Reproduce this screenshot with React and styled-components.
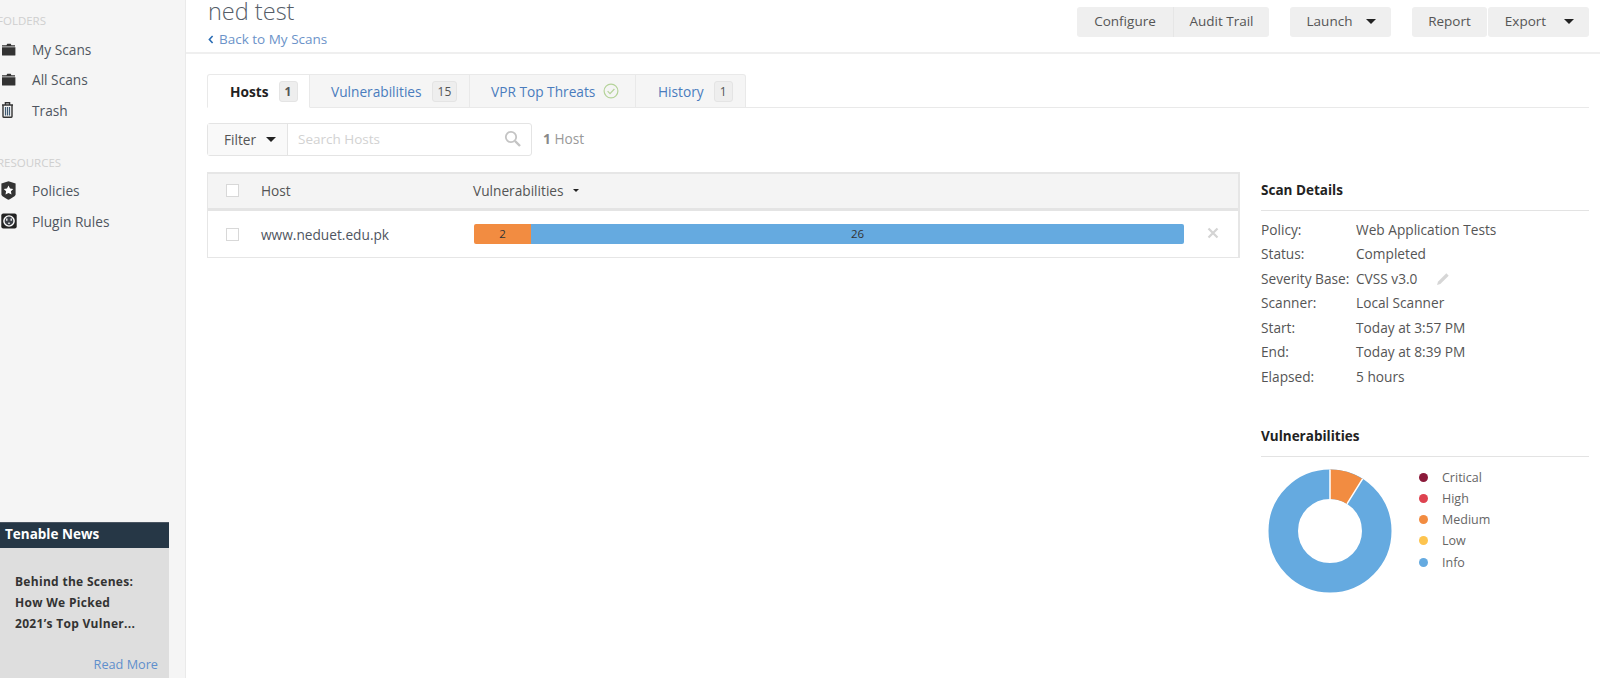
import styled, { createGlobalStyle } from "styled-components";

const GlobalStyle = createGlobalStyle`
html, body {
    margin: 0;
    height: 678px;
    overflow: hidden;
    background: #fff;
}
* { box-sizing: border-box; }
body {
    font-family: "Open Sans", "Liberation Sans", sans-serif;
    font-size: 13.7px;
    color: #555;
}
`;

const FolderIcon = () => (
    <svg width="15" height="13" viewBox="0 0 15 13">
        <path d="M1 2.2h4.4l.9-1.4h3.4l.7 1.4H14v1.3H1z" fill="#333" />
        <path d="M1 4.3h13.4V12a.6.6 0 0 1-.6.6H1.6A.6.6 0 0 1 1 12z" fill="#333" />
    </svg>
);

const TrashIcon = () => (
    <svg width="13" height="16" viewBox="0 0 13 16">
        <path d="M4.4 2.4V.8h4.2v1.6M1 3h11M2 3v11.6c0 .4.2.6.6.6h7.8c.4 0 .6-.2.6-.6V3" fill="none" stroke="#333" strokeWidth="1.4" />
        <path d="M4.5 5v8.4M6.5 5v8.4M8.5 5v8.4" stroke="#3f5a72" strokeWidth="1.2" />
    </svg>
);

const ShieldIcon = () => (
    <svg width="15" height="19" viewBox="0 0 15 19">
        <path d="M7.5.2 14.6 2.6v11c0 1.4-3.9 3.8-7.1 5.2C4.3 17.4.4 15 .4 13.600V2.600z" fill="#333" />
        <path d="m7.5 4.600 1.500 3 3.300.4-2.400 2.300.6 3.300-3-1.600-3 1.600.6-3.300-2.400-2.300 3.300-.4z" fill="#fff" />
    </svg>
);

const PlugIcon = () => (
    <svg width="16" height="16" viewBox="0 0 16 16">
        <rect x="0.3" y="0.5" width="15.4" height="15" rx="2" fill="#222" />
        <circle cx="8" cy="8" r="5.8" fill="#fff" />
        <circle cx="8" cy="8" r="4.4" fill="#3b3f46" />
        <path d="M5.800 5.500v2.300M10.200 5.500v2.300" stroke="#fff" strokeWidth="1.300" />
        <path d="M6.900 10.700a1.100 1.100 0 0 1 2.200 0z" fill="#fff" />
    </svg>
);

const Caret = styled.span`
    display: inline-block;
    width: 0;
    height: 0;
    border-left: ${(p) => p.$size || 5}px solid transparent;
    border-right: ${(p) => p.$size || 5}px solid transparent;
    border-top: ${(p) => p.$size || 5}px solid #222;
`;

const Page = styled.div`
    display: flex;
    width: 1600px;
    height: 678px;
    overflow: hidden;
`;

const Sidebar = styled.aside`
    flex: 0 0 186px;
    height: 678px;
    background: #f5f5f5;
    border-right: 1px solid #eaeaea;
    display: flex;
    flex-direction: column;
    overflow: hidden;
`;

const SideLabel = styled.div`
    margin-left: -3px;
    margin-top: ${(p) => p.$top}px;
    margin-bottom: 4px;
    height: 18px;
    line-height: 18px;
    font-size: 11.5px;
    color: #cfcfcf;
    text-transform: uppercase;
`;

const SideItem = styled.div`
    display: flex;
    align-items: center;
    height: 30.500px;
    color: #4f5560;
    font-size: 13.7px;
`;

const SideIcon = styled.span`
    flex: 0 0 32px;
    padding-left: 1px;
    display: flex;
    align-items: center;
`;

const News = styled.section`
    margin-top: auto;
    width: 169px;
    height: 156px;
    background: #dedede;
    display: flex;
    flex-direction: column;
`;

const NewsHead = styled.div`
    height: 26px;
    line-height: 23px;
    padding-left: 5px;
    background: #263746;
    color: #fff;
    font-weight: 700;
    font-size: 13.5px;
    border-top: 1px solid #4a5562;
`;

const NewsText = styled.div`
    margin-top: 23px;
    padding-left: 15px;
    font-weight: 700;
    font-size: 12px;
    line-height: 21.2px;
    letter-spacing: 0.3px;
    color: #333;
`;

const ReadMore = styled.a`
    margin-top: auto;
    margin-bottom: 5px;
    padding-right: 11px;
    text-align: right;
    font-size: 12.7px;
    color: #5f8fcc;
`;

const Main = styled.main`
    flex: 1;
    min-width: 0;
`;

const TopBar = styled.header`
    height: 54px;
    border-bottom: 2px solid #efefef;
    padding: 0 11px 0 22px;
    display: flex;
    justify-content: space-between;
`;

const Title = styled.h1`
    margin: 0;
    font-size: 23.5px;
    line-height: 22px;
    font-weight: 300;
    color: #555d68;
`;

const BackLink = styled.a`
    display: flex;
    align-items: center;
    gap: 5px;
    margin-top: 8px;
    font-size: 13.5px;
    line-height: 18px;
    color: #6c93c9;
    svg { color: #2a6db5; }
`;

const Actions = styled.div`
    display: flex;
    padding-top: 7px;
    gap: 21px;
`;

const ButtonGroup = styled.div`
    display: flex;
    gap: ${(p) => p.$gap || 0}px;
`;

const Button = styled.button`
    width: ${(p) => p.$w}px;
    height: 30px;
    border: 0;
    padding: 0 0 2px ${(p) => p.$left || 0}px;
    background: #efefef;
    border-radius: ${(p) => p.$r || "3px"};
    border-left: ${(p) => (p.$split ? "1px solid #e6e6e6" : "0")};
    display: flex;
    align-items: center;
    justify-content: center;
    gap: ${(p) => p.$gap || 0}px;
    font-family: inherit;
    font-size: 13.5px;
    color: #555;
`;

const Content = styled.div`
    padding: 20px 11px 0 21px;
`;

const Tabs = styled.nav`
    display: flex;
    height: 34px;
    border-bottom: 1px solid #e9e9e9;
`;

const Tab = styled.div`
    width: ${(p) => p.$w}px;
    height: 34px;
    padding-left: ${(p) => p.$left}px;
    display: flex;
    align-items: center;
    gap: ${(p) => p.$gap || 10}px;
    font-size: 13.7px;
    background: ${(p) => (p.$active ? "#fff" : "#f5f5f5")};
    color: ${(p) => (p.$active ? "#222" : "#4a7cbd")};
    font-weight: ${(p) => (p.$active ? 700 : 400)};
    border: 1px solid #e9e9e9;
    border-left-width: ${(p) => (p.$first ? 1 : 0)}px;
    border-bottom-color: ${(p) => (p.$active ? "#fff" : "#e9e9e9")};
    border-radius: ${(p) => p.$r || 0};
`;

const Badge = styled.span`
    min-width: 19px;
    height: 21px;
    padding: 0 5px;
    line-height: 20px;
    text-align: center;
    background: #eee;
    border: 1px solid #e4e4e4;
    border-radius: 3px;
    font-size: 12px;
    font-weight: ${(p) => (p.$active ? 700 : 400)};
    color: #555;
`;

const FilterRow = styled.div`
    display: flex;
    align-items: center;
    margin-top: 15px;
    height: 33px;
`;

const FilterBox = styled.div`
    width: 325px;
    height: 33px;
    display: flex;
    border: 1px solid #e4e4e4;
    border-radius: 3px;
`;

const FilterButton = styled.div`
    width: 80px;
    padding-left: 16px;
    display: flex;
    align-items: center;
    gap: 10px;
    background: #f9f9f9;
    border-right: 1px solid #e4e4e4;
    font-size: 13.7px;
    color: #555;
`;

const SearchField = styled.div`
    flex: 1;
    display: flex;
    align-items: center;
    justify-content: space-between;
    padding: 0 10px 2px 10px;
    font-size: 13.5px;
    color: #d2d2d2;
`;

const HostCount = styled.div`
    margin: 0 0 3px 11px;
    font-size: 13.7px;
    color: #999;
    b { color: #888; }
`;

const Columns = styled.div`
    display: grid;
    grid-template-columns: 1033px 328px;
    column-gap: 21px;
    margin-top: 16px;
`;

const HostTable = styled.div`
    height: 86px;
    border: 1px solid #e6e6e6;
    border-top-width: 2px;
    border-right-width: 2px;
    border-left-width: 1px;
    border-bottom-width: 2px;
`;

const TableRow = styled.div`
    display: grid;
    grid-template-columns: 53px 213px 1fr 54px;
    align-items: center;
    height: ${(p) => p.$h}px;
    padding-bottom: ${(p) => (p.$head ? 2 : 0)}px;
    background: ${(p) => p.$bg || "#fff"};
    border-bottom: ${(p) => (p.$head ? "3px solid #e4e4e4" : "0")};
    font-size: 13.7px;
    color: ${(p) => p.$color || "#555"};
`;

const CheckBox = styled.span`
    display: block;
    width: 13px;
    height: 13px;
    margin-left: 18px;
    background: #fff;
    border: 1px solid #d8d8d8;
`;

const SortHead = styled.div`
    display: flex;
    align-items: center;
    gap: 9px;
    margin-left: -1px;
`;

const Bar = styled.div`
    display: flex;
    height: 20px;
    margin-top: -1px;
    border-radius: 2px;
    overflow: hidden;
    font-size: 11.5px;
    color: #333;
`;

const BarPart = styled.div`
    flex: ${(p) => p.$flex};
    background: ${(p) => p.$color};
    text-align: center;
    line-height: 20px;
`;

const RemoveCell = styled.div`
    display: flex;
    justify-content: center;
    padding: 0 0 2px 3px;
`;

const SectionTitle = styled.h3`
    margin: ${(p) => p.$top || 0}px 0 0;
    height: 39px;
    line-height: 37px;
    border-bottom: 1px solid #e3e3e3;
    font-size: 13.5px;
    font-weight: 700;
    color: #222;
`;

const DetailList = styled.div`
    margin-top: 6.500px;
`;

const DetailRow = styled.div`
    display: grid;
    grid-template-columns: 95px 1fr;
    height: 24.600px;
    line-height: 24.600px;
    font-size: 13.7px;
    color: #555;
`;

const DetailValue = styled.span`
    display: flex;
    align-items: center;
    gap: 19px;
`;

const ChartRow = styled.div`
    display: flex;
    margin-top: 12px;
    padding-left: 7px;
`;

const Legend = styled.ul`
    list-style: none;
    margin: -2px 0 0 27px;
    padding: 0;
`;

const LegendItem = styled.li`
    display: flex;
    align-items: center;
    height: 21.200px;
    font-size: 12.500px;
    color: #666;
`;

const Dot = styled.span`
    width: 9px;
    height: 9px;
    margin-right: 14px;
    border-radius: 50%;
    background: ${(p) => p.$color};
`;

const details = [
    ["Policy:", "Web Application Tests"],
    ["Status:", "Completed"],
    ["Severity Base:", "CVSS v3.0"],
    ["Scanner:", "Local Scanner"],
    ["Start:", "Today at 3:57 PM"],
    ["End:", "Today at 8:39 PM"],
    ["Elapsed:", "5 hours"],
];

const legend = [
    ["Critical", "#8b1a3a"],
    ["High", "#de4350"],
    ["Medium", "#f28c41"],
    ["Low", "#fdc44f"],
    ["Info", "#65aae0"],
];

export default function App() {
    return (
        <Page>
            <GlobalStyle />
            <Sidebar>
                <SideLabel $top={12}>Folders</SideLabel>
                <SideItem><SideIcon><FolderIcon /></SideIcon>My Scans</SideItem>
                <SideItem><SideIcon><FolderIcon /></SideIcon>All Scans</SideItem>
                <SideItem><SideIcon><TrashIcon /></SideIcon>Trash</SideItem>
                <SideLabel $top={28}>Resources</SideLabel>
                <SideItem><SideIcon><ShieldIcon /></SideIcon>Policies</SideItem>
                <SideItem><SideIcon><PlugIcon /></SideIcon>Plugin Rules</SideItem>
                <News>
                    <NewsHead>Tenable News</NewsHead>
                    <NewsText>
                        Behind the Scenes:<br />
                        How We Picked<br />
                        2021’s Top Vulner...
                    </NewsText>
                    <ReadMore>Read More</ReadMore>
                </News>
            </Sidebar>
            <Main>
                <TopBar>
                    <div>
                        <Title>ned test</Title>
                        <BackLink>
                            <svg width="6" height="9" viewBox="0 0 6 9">
                                <path d="M4.600 1 1.400 4.500l3.200 3.500" fill="none" stroke="currentColor" strokeWidth="1.600" />
                            </svg>
                            Back to My Scans
                        </BackLink>
                    </div>
                    <Actions>
                        <ButtonGroup>
                            <Button $w={96} $r="3px 0 0 3px">Configure</Button>
                            <Button $w={96} $r="0 3px 3px 0" $split>Audit Trail</Button>
                        </ButtonGroup>
                        <Button $w={101} $gap={14} $left={2}>Launch <Caret /></Button>
                        <ButtonGroup $gap={1}>
                            <Button $w={75}>Report</Button>
                            <Button $w={101} $gap={18} $left={2}>Export <Caret /></Button>
                        </ButtonGroup>
                    </Actions>
                </TopBar>
                <Content>
                    <Tabs>
                        <Tab $w={103} $left={22} $active $first $r="3px 0 0 0">Hosts <Badge $active>1</Badge></Tab>
                        <Tab $w={160} $left={21}>Vulnerabilities <Badge>15</Badge></Tab>
                        <Tab $w={166} $left={21} $gap={8}>
                            VPR Top Threats
                            <svg width="16" height="16" viewBox="0 0 16 16">
                                <circle cx="8" cy="8" r="6.900" fill="none" stroke="#b5d39a" strokeWidth="1.200" />
                                <path d="m4.600 8.200 2.400 2.400 4.400-4.600" fill="none" stroke="#b5d39a" strokeWidth="1.200" />
                            </svg>
                        </Tab>
                        <Tab $w={110} $left={22} $r="0 3px 0 0">History <Badge>1</Badge></Tab>
                    </Tabs>
                    <FilterRow>
                        <FilterBox>
                            <FilterButton>Filter <Caret /></FilterButton>
                            <SearchField>
                                Search Hosts
                                <svg width="17" height="17" viewBox="0 0 17 17">
                                    <circle cx="7" cy="7" r="5.200" fill="none" stroke="#c4c4c4" strokeWidth="1.800" />
                                    <path d="m11 11 5 5" stroke="#c4c4c4" strokeWidth="2.400" />
                                </svg>
                            </SearchField>
                        </FilterBox>
                        <HostCount><b>1</b> Host</HostCount>
                    </FilterRow>
                    <Columns>
                        <div>
                            <HostTable>
                                <TableRow $h={37} $head $bg="#f4f4f4">
                                    <CheckBox />
                                    <span>Host</span>
                                    <SortHead>Vulnerabilities <Caret $size={3} /></SortHead>
                                </TableRow>
                                <TableRow $h={46} $color="#4f5560">
                                    <CheckBox />
                                    <span>www.neduet.edu.pk</span>
                                    <Bar>
                                        <BarPart $flex={57} $color="#f28c41">2</BarPart>
                                        <BarPart $flex={653} $color="#65aae0">26</BarPart>
                                    </Bar>
                                    <RemoveCell>
                                        <svg width="12" height="12" viewBox="0 0 12 12">
                                            <path d="m1.500 1.500 9 9M10.500 1.500l-9 9" stroke="#d4d4d4" strokeWidth="2.200" />
                                        </svg>
                                    </RemoveCell>
                                </TableRow>
                            </HostTable>
                        </div>
                        <div>
                            <SectionTitle>Scan Details</SectionTitle>
                            <DetailList>
                                {details.map(([label, value]) => (
                                    <DetailRow key={label}>
                                        <span>{label}</span>
                                        <DetailValue>
                                            {value}
                                            {label === "Severity Base:" && (
                                                <svg width="14" height="14" viewBox="0 0 13 13">
                                                    <path d="M1 12l.8-3L9.600 1.200l2.200 2.200L4 11.200z" fill="#d6d6d6" />
                                                </svg>
                                            )}
                                        </DetailValue>
                                    </DetailRow>
                                ))}
                            </DetailList>
                            <SectionTitle $top={28}>Vulnerabilities</SectionTitle>
                            <ChartRow>
                                <svg width="124" height="124" viewBox="0 0 124 124">
                                    <circle cx="62" cy="62" r="46.750" fill="none" stroke="#65aae0" strokeWidth="29.500" />
                                    <path d="M62 .5A61.500 61.500 0 0 1 94.600 9.900L79 34.900A32 32 0 0 0 62 30z" fill="#f28c41" />
                                    <path d="M62 .5V30M94.600 9.900 79 34.900" stroke="#fff" strokeWidth="1.500" />
                                </svg>
                                <Legend>
                                    {legend.map(([name, color]) => (
                                        <LegendItem key={name}><Dot $color={color} />{name}</LegendItem>
                                    ))}
                                </Legend>
                            </ChartRow>
                        </div>
                    </Columns>
                </Content>
            </Main>
        </Page>
    );
}
